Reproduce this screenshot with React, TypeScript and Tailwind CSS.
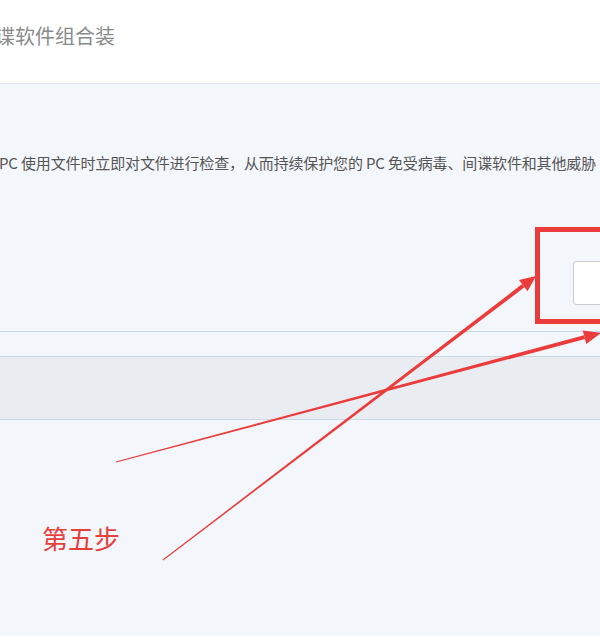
const CJK = "font-['Noto_Sans_CJK_SC','Noto_Sans',sans-serif]";

function Annotations() {
  return (
    <svg
      className="pointer-events-none absolute left-0 top-0"
      width={600}
      height={636}
      viewBox="0 0 600 636"
    >
      {/* highlight box */}
      <rect
        x={537.5}
        y={229.5}
        width={100}
        height={92}
        fill="none"
        stroke="#ec3b3b"
        strokeWidth={5}
      />
      {/* arrow to box */}
      <polygon
        points="163.3,560.4 162.7,559.6 522.1,284.1 524.5,287.3"
        fill="#ec3b3b"
      />
      <polygon points="536,276 527.5,291.3 519,280.1" fill="#ec3b3b" />
      {/* arrow to button edge */}
      <polygon
        points="116.1,462.5 115.9,461.5 584,335.2 585.1,339.1"
        fill="#ec3b3b"
      />
      <polygon points="601,333 586.3,343.9 582.7,330.4" fill="#ec3b3b" />
    </svg>
  );
}

export default function App() {
  return (
    <div className={`relative h-[636px] w-[600px] overflow-hidden bg-[#f3f6fa] ${CJK}`}>
      <div className="h-[84px] overflow-hidden border-b border-[#e4e7ec] bg-white pt-[22px]">
        <h1 className="ml-[-25px] whitespace-nowrap text-[20px] leading-[28px] text-[#8a8a8a]">
          间谍软件组合装
        </h1>
      </div>

      <div className="overflow-hidden">
        <p className="ml-[-1px] mt-[69px] whitespace-nowrap text-[15px] leading-[20px] tracking-[-0.14px] text-[#555]">
          PC 使用文件时立即对文件进行检查，从而持续保护您的 PC 免受病毒、间谍软件和其他威胁
        </p>
      </div>

      <div className="mt-[88px] flex h-[70px]">
        <button className="ml-[573px] h-[44px] w-[60px] shrink-0 rounded-[3px] border border-[#c9cdd2] bg-white" />
      </div>

      <div className="h-[25px] border-t border-[#cad8e4]" />
      <div className="h-[64px] border-y border-[#cad8e4] bg-[#e9edf2]" />

      <p className="ml-[42px] mt-[100px] text-[26px] leading-[36px] text-[#e5403d]">
        第五步
      </p>

      <Annotations />
    </div>
  );
}
